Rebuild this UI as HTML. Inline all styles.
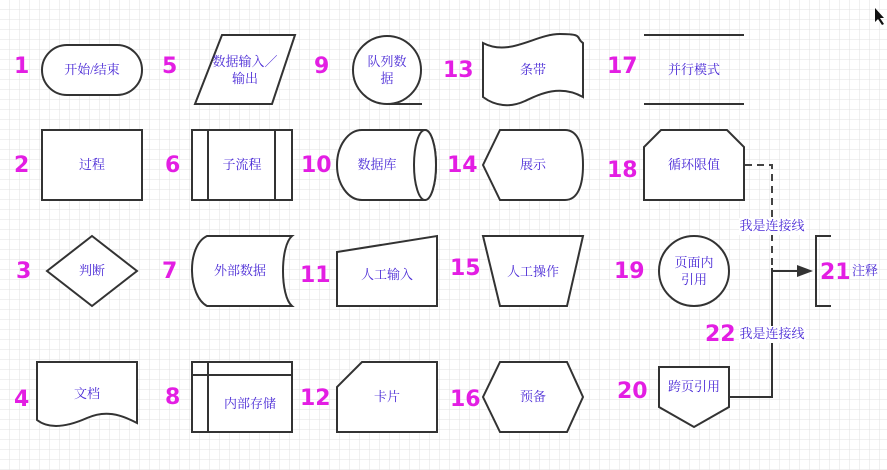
<!DOCTYPE html>
<html><head><meta charset="utf-8"><style>
html,body{margin:0;padding:0;background:#fff;}
svg{display:block}
.n{font-family:"DejaVu Sans","Liberation Sans",sans-serif;font-weight:bold;font-size:22px;fill:#e31ee3;}
.t{font-family:"Liberation Serif","Noto Serif CJK SC",serif;font-size:13px;fill:#4a2ad6;text-anchor:middle;dominant-baseline:middle;}
.s{fill:#fff;stroke:#333;stroke-width:2;}
.l{fill:none;stroke:#333;stroke-width:2;}
</style></head><body>
<svg width="887" height="470" viewBox="0 0 887 470" xmlns="http://www.w3.org/2000/svg">
<defs><pattern id="g" width="10" height="10" patternUnits="userSpaceOnUse"><path d="M10 0V10H0" fill="none" stroke="#e2e2e2" stroke-width="1"/></pattern></defs>
<rect width="887" height="470" fill="url(#g)"/>
<!-- row1 -->
<text class="n" x="14" y="73">1</text>
<rect class="s" x="42" y="45" width="100" height="50" rx="25"/><text class="t" x="92" y="71">开始/结束</text>
<text class="n" x="162" y="73">5</text>
<path class="s" d="M222 35H295L272 104H195Z"/><text class="t" x="245" y="63">数据输入／</text><text class="t" x="245" y="80">输出</text>
<text class="n" x="314" y="73">9</text>
<circle class="s" cx="387" cy="70" r="34"/><path class="l" d="M387 104H422"/><text class="t" x="387" y="63">队列数</text><text class="t" x="387" y="80">据</text>
<text class="n" x="443" y="77">13</text>
<path class="s" d="M483 43C510 57 535 34 560 34S575 38 583 43V97C560 84 540 94 525 101S495 106 483 97Z"/><text class="t" x="533" y="71">条带</text>
<text class="n" x="607" y="73">17</text>
<path class="l" d="M644 35H744M644 104H744"/><text class="t" x="694" y="71">并行模式</text>
<!-- row2 -->
<text class="n" x="14" y="172">2</text>
<rect class="s" x="42" y="130" width="100" height="70"/><text class="t" x="92" y="166">过程</text>
<text class="n" x="165" y="172">6</text>
<rect class="s" x="192" y="130" width="100" height="70"/><path class="l" d="M208 130V200M275 130V200"/><text class="t" x="242" y="166">子流程</text>
<text class="n" x="301" y="172">10</text>
<path class="s" d="M362 130H425A11 35 0 0 1 425 200H362A25 35 0 0 1 362 130Z"/><ellipse class="s" cx="425" cy="165" rx="11" ry="35"/><text class="t" x="377" y="166">数据库</text>
<text class="n" x="447" y="172">14</text>
<path class="s" d="M500 130H565C578 130 583 145 583 165S578 200 565 200H500L483 165Z"/><text class="t" x="533" y="166">展示</text>
<text class="n" x="607" y="177">18</text>
<path class="s" d="M661 130H727L744 147V200H644V147Z"/><text class="t" x="694" y="166">循环限值</text>
<path d="M745 165H772V268" fill="none" stroke="#444" stroke-width="2" stroke-dasharray="7,5"/>
<!-- row3 -->
<text class="n" x="16" y="278">3</text>
<path class="s" d="M92 236L137 271L92 306L47 271Z"/><text class="t" x="92" y="272">判断</text>
<text class="n" x="162" y="278">7</text>
<path class="s" d="M207 236H292C280 246 280 296 292 306H207C188 296 186 246 207 236Z"/><text class="t" x="240" y="272">外部数据</text>
<text class="n" x="300" y="282">11</text>
<path class="s" d="M337 252L437 236V306H337Z"/><text class="t" x="387" y="276">人工输入</text>
<text class="n" x="450" y="275">15</text>
<path class="s" d="M483 236H583L567 306H500Z"/><text class="t" x="533" y="273">人工操作</text>
<text class="n" x="614" y="278">19</text>
<circle class="s" cx="694" cy="271" r="35"/><text class="t" x="694" y="264">页面内</text><text class="t" x="694" y="281">引用</text>
<path class="l" d="M831 236H816V306H831"/>
<path class="l" d="M772 268V397H729M772 271H800"/><path d="M813 271L797 265V277Z" fill="#333"/>
<rect x="739" y="218" width="67" height="17" fill="#fff"/>
<text class="t" x="772" y="227">我是连接线</text>
<text class="n" x="820" y="279">21</text><text class="t" x="865" y="272">注释</text>
<rect x="739" y="326" width="67" height="17" fill="#fff"/>
<text class="n" x="705" y="341">22</text><text class="t" x="772" y="335">我是连接线</text>
<!-- row4 -->
<text class="n" x="14" y="406">4</text>
<path class="s" d="M37 362H137V423C120 414 105 410 87 418S50 430 37 420Z"/><text class="t" x="87" y="395">文档</text>
<text class="n" x="165" y="404">8</text>
<rect class="s" x="192" y="362" width="100" height="70"/><path class="l" d="M208 362V432M192 375H292"/><text class="t" x="250" y="405">内部存储</text>
<text class="n" x="300" y="405">12</text>
<path class="s" d="M362 362H437V432H337V387Z"/><text class="t" x="387" y="398">卡片</text>
<text class="n" x="450" y="406">16</text>
<path class="s" d="M500 362H567L583 397L567 432H500L483 397Z"/><text class="t" x="533" y="398">预备</text>
<text class="n" x="617" y="398">20</text>
<path class="s" d="M659 367H729V407L694 427L659 407Z"/><text class="t" x="694" y="388">跨页引用</text>
<path d="M875 8L875 22L878 19L882 25L884 24L880 18L884 18Z" fill="#111"/>
</svg>
</body></html>
